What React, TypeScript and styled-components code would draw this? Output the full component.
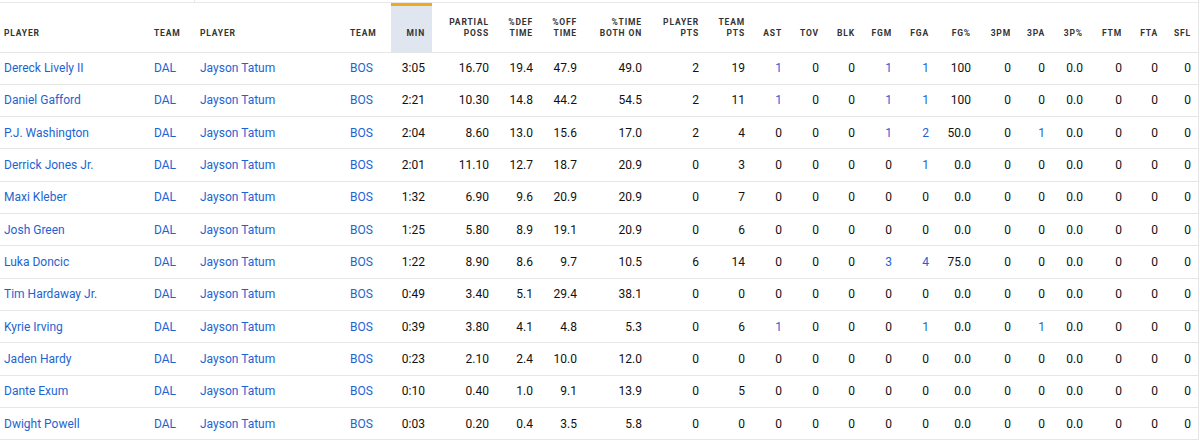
import React from "react";
import styled, { createGlobalStyle } from "styled-components";

const Global = createGlobalStyle`
  html, body { margin: 0; padding: 0; background: #fff; }
  body { font-family: Roboto, "Liberation Sans", Arial, sans-serif; }
`;

const Page = styled.div`
  width: 1198px;
  border-right: 1px solid #e6e6e6;
`;

const TopStrip = styled.div`
  height: 2px;
  border-bottom: 1px solid #e8e8e8;
  display: flex;
`;

const TopTab = styled.div`
  width: 194px;
  border-right: 1px solid #e8e8e8;
`;

const Table = styled.table`
  border-collapse: collapse;
  table-layout: fixed;
  width: 1198px;
`;

const HeadCell = styled.th<{ $left?: boolean; $active?: boolean; $pl?: number }>`
  position: relative;
  height: 49px;
  box-sizing: border-box;
  padding: 0 ${(p) => (p.$left ? 0 : 7)}px 13px ${(p) => p.$pl ?? 0}px;
  vertical-align: bottom;
  text-align: ${(p) => (p.$left ? "left" : "right")};
  font-size: 8.5px;
  line-height: 11px;
  font-weight: 700;
  letter-spacing: 0.85px;
  color: #333;
  text-transform: uppercase;
  white-space: nowrap;
  border-bottom: 1px solid #e6e6e6;
  background: ${(p) => (p.$active ? "#dfe6f0" : "transparent")};
`;

const ActiveBar = styled.span`
  position: absolute;
  left: 0;
  right: 0;
  top: 0;
  height: 3px;
  background: #f0a81e;
`;

const Row = styled.tr`
  height: 32.33px;
`;

const Cell = styled.td<{ $left?: boolean; $pl?: number }>`
  box-sizing: border-box;
  padding: 0 ${(p) => (p.$left ? 0 : 7)}px 0 ${(p) => p.$pl ?? 0}px;
  text-align: ${(p) => (p.$left ? "left" : "right")};
  font-size: 12px;
  color: #111;
  white-space: nowrap;
  border-bottom: 1px solid #e6e6e6;
  vertical-align: middle;
`;

const Link = styled.a`
  color: #1d64d2;
  text-decoration: none;
`;

type Col = { label: React.ReactNode; width: number; left?: boolean; pl?: number; active?: boolean };

const cols: Col[] = [
  { label: "Player", width: 150, left: true, pl: 4 },
  { label: "Team", width: 46, left: true, pl: 4 },
  { label: "Player", width: 150, left: true, pl: 4 },
  { label: "Team", width: 45, left: true, pl: 4 },
  { label: "Min", width: 41, active: true },
  { label: <>Partial<br />Poss</>, width: 64 },
  { label: <>%Def<br />Time</>, width: 44 },
  { label: <>%Off<br />Time</>, width: 44 },
  { label: <>%Time<br />Both On</>, width: 65 },
  { label: <>Player<br />Pts</>, width: 57 },
  { label: <>Team<br />Pts</>, width: 46 },
  { label: "AST", width: 37 },
  { label: "TOV", width: 37 },
  { label: "BLK", width: 36 },
  { label: "FGM", width: 37 },
  { label: "FGA", width: 37 },
  { label: "FG%", width: 42 },
  { label: "3PM", width: 40 },
  { label: "3PA", width: 34 },
  { label: "3P%", width: 38 },
  { label: "FTM", width: 39 },
  { label: "FTA", width: 36 },
  { label: "SFL", width: 33 },
];

// stats: min, poss, def, off, both, ppts, tpts, ast, tov, blk, fgm, fga, fgp, 3pm, 3pa, 3pp, ftm, fta, sfl
const rows: [string, string[]][] = [
  ["Dereck Lively II", ["3:05", "16.70", "19.4", "47.9", "49.0", "2", "19", "1", "0", "0", "1", "1", "100", "0", "0", "0.0", "0", "0", "0"]],
  ["Daniel Gafford", ["2:21", "10.30", "14.8", "44.2", "54.5", "2", "11", "1", "0", "0", "1", "1", "100", "0", "0", "0.0", "0", "0", "0"]],
  ["P.J. Washington", ["2:04", "8.60", "13.0", "15.6", "17.0", "2", "4", "0", "0", "0", "1", "2", "50.0", "0", "1", "0.0", "0", "0", "0"]],
  ["Derrick Jones Jr.", ["2:01", "11.10", "12.7", "18.7", "20.9", "0", "3", "0", "0", "0", "0", "1", "0.0", "0", "0", "0.0", "0", "0", "0"]],
  ["Maxi Kleber", ["1:32", "6.90", "9.6", "20.9", "20.9", "0", "7", "0", "0", "0", "0", "0", "0.0", "0", "0", "0.0", "0", "0", "0"]],
  ["Josh Green", ["1:25", "5.80", "8.9", "19.1", "20.9", "0", "6", "0", "0", "0", "0", "0", "0.0", "0", "0", "0.0", "0", "0", "0"]],
  ["Luka Doncic", ["1:22", "8.90", "8.6", "9.7", "10.5", "6", "14", "0", "0", "0", "3", "4", "75.0", "0", "0", "0.0", "0", "0", "0"]],
  ["Tim Hardaway Jr.", ["0:49", "3.40", "5.1", "29.4", "38.1", "0", "0", "0", "0", "0", "0", "0", "0.0", "0", "0", "0.0", "0", "0", "0"]],
  ["Kyrie Irving", ["0:39", "3.80", "4.1", "4.8", "5.3", "0", "6", "1", "0", "0", "0", "1", "0.0", "0", "1", "0.0", "0", "0", "0"]],
  ["Jaden Hardy", ["0:23", "2.10", "2.4", "10.0", "12.0", "0", "0", "0", "0", "0", "0", "0", "0.0", "0", "0", "0.0", "0", "0", "0"]],
  ["Dante Exum", ["0:10", "0.40", "1.0", "9.1", "13.9", "0", "5", "0", "0", "0", "0", "0", "0.0", "0", "0", "0.0", "0", "0", "0"]],
  ["Dwight Powell", ["0:03", "0.20", "0.4", "3.5", "5.8", "0", "0", "0", "0", "0", "0", "0", "0.0", "0", "0", "0.0", "0", "0", "0"]],
];

// stat columns rendered as links when non-zero
const linkIdx = new Set([7, 10, 11, 13, 14, 16, 17]);

export default function App() {
  return (
    <>
      <Global />
      <Page>
        <TopStrip>
          <TopTab />
        </TopStrip>
        <Table>
          <colgroup>
            {cols.map((c, i) => (
              <col key={i} style={{ width: c.width }} />
            ))}
          </colgroup>
          <thead>
            <tr>
              {cols.map((c, i) => (
                <HeadCell key={i} $left={c.left} $pl={c.pl} $active={c.active}>
                  {c.active && <ActiveBar />}
                  {c.label}
                </HeadCell>
              ))}
            </tr>
          </thead>
          <tbody>
            {rows.map(([name, stats]) => (
              <Row key={name}>
                <Cell $left $pl={4}><Link>{name}</Link></Cell>
                <Cell $left $pl={4}><Link>DAL</Link></Cell>
                <Cell $left $pl={4}><Link>Jayson Tatum</Link></Cell>
                <Cell $left $pl={4}><Link>BOS</Link></Cell>
                {stats.map((s, i) => (
                  <Cell key={i}>
                    {linkIdx.has(i) && s !== "0" ? <Link>{s}</Link> : s}
                  </Cell>
                ))}
              </Row>
            ))}
          </tbody>
        </Table>
      </Page>
    </>
  );
}
